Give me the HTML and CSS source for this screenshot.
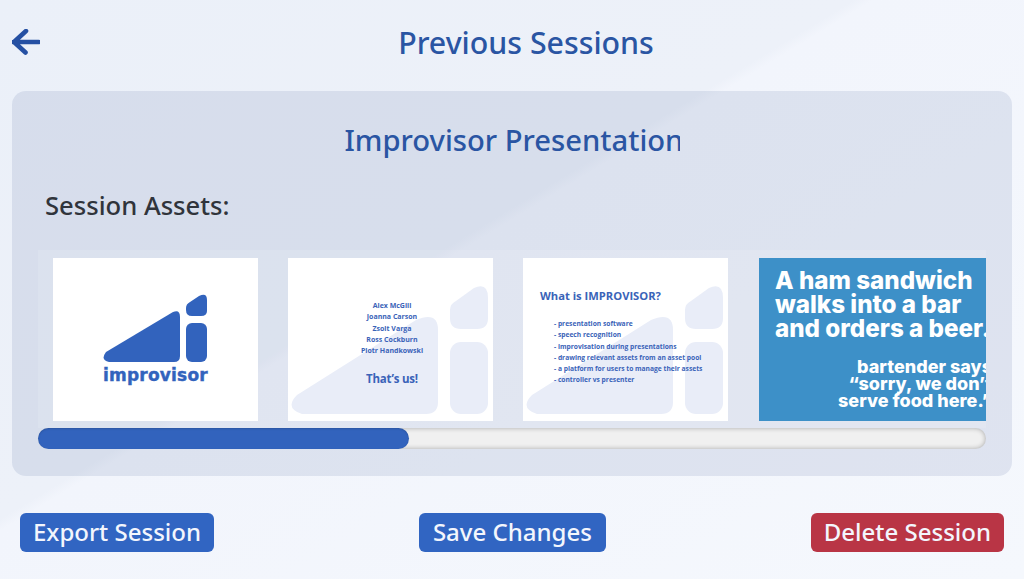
FILE: index.html
```html
<!DOCTYPE html>
<html lang="en">
<head>
    <meta charset="UTF-8">
    <meta name="viewport" content="width=device-width, initial-scale=1.0">
    <title>Previous Sessions</title>
    <link rel="stylesheet" href="styles.css">
</head>
<body>
    <header class="top-bar">
        <svg class="back-icon" width="28" height="26" viewBox="0 0 28 26">
            <path d="M1.5 13H26.5M14 2 2 13 13.5 23.5" fill="none" stroke="#2550a3" stroke-width="4.6" stroke-linecap="round" stroke-linejoin="round"/>
        </svg>
        <h1 class="page-title">Previous Sessions</h1>
    </header>

    <main class="session-panel">
        <h2 class="session-name">Improvisor Presentation</h2>
        <h3 class="assets-label">Session Assets:</h3>

        <div class="carousel">
            <div class="slide slide-logo">
                <svg class="logo-mark" width="104" height="70" viewBox="0 0 104 70">
                    <path d="M3 58 70 18Q77 15 77 23V62Q77 68 71 68H6Q-3 66 3 58Z" fill="#3263bd"/>
                    <path d="M83 14Q83 10 87 8L96 2Q104 -2 104 6V17Q104 22 98 22H89Q83 22 83 16Z" fill="#3263bd"/>
                    <rect x="83" y="29" width="21" height="39" rx="6" fill="#3263bd"/>
                </svg>
                <div class="logo-text">improvisor</div>
            </div>

            <div class="slide slide-names">
                <svg class="watermark" viewBox="0 0 205 163">
                    <path d="M9 137 128 62Q150 53 150 72V144Q150 156 138 156H14Q-4 150 9 137Z" fill="#e9edf8"/>
                    <path d="M162 52Q162 46 168 43L186 30Q200 24 200 40V60Q200 71 189 71H173Q162 71 162 60Z" fill="#e9edf8"/>
                    <rect x="162" y="84" width="38" height="72" rx="11" fill="#e9edf8"/>
                </svg>
                <div class="names-list">
                    <div>Alex McGill</div>
                    <div>Joanna Carson</div>
                    <div>Zsolt Varga</div>
                    <div>Ross Cockburn</div>
                    <div>Piotr Handkowski</div>
                </div>
                <div class="names-end">That’s us!</div>
            </div>

            <div class="slide slide-about">
                <svg class="watermark" viewBox="0 0 205 163">
                    <path d="M9 137 128 62Q150 53 150 72V144Q150 156 138 156H14Q-4 150 9 137Z" fill="#e9edf8"/>
                    <path d="M162 52Q162 46 168 43L186 30Q200 24 200 40V60Q200 71 189 71H173Q162 71 162 60Z" fill="#e9edf8"/>
                    <rect x="162" y="84" width="38" height="72" rx="11" fill="#e9edf8"/>
                </svg>
                <div class="about-title">What is IMPROVISOR?</div>
                <ul class="about-list">
                    <li>- presentation software</li>
                    <li>- speech recognition</li>
                    <li>- improvisation during presentations</li>
                    <li>- drawing relevant assets from an asset pool</li>
                    <li>- a platform for users to manage their assets</li>
                    <li>- controller vs presenter</li>
                </ul>
            </div>

            <div class="slide slide-joke">
                <div class="joke-big">A ham sandwich<br>walks into a bar<br>and orders a beer.</div>
                <div class="joke-small">bartender says<br>“sorry, we don’t<br>serve food here.”</div>
            </div>
        </div>

        <div class="scroll-track">
            <div class="scroll-thumb"></div>
        </div>
    </main>

    <footer class="actions">
        <button class="btn">Export Session</button>
        <button class="btn btn-save">Save Changes</button>
        <button class="btn btn-danger">Delete Session</button>
    </footer>
</body>
</html>
```

FILE: styles.css
```css
* {
    box-sizing: border-box;
}

body {
    margin: 0;
    width: 1024px;
    height: 579px;
    overflow: hidden;
    font-family: "Noto Sans", sans-serif;
    background: linear-gradient(148.7deg, #ebf0f9 0%, #edf1f9 43.2%, #f2f5fc 44.2%, #f5f8fd 100%);
}

.top-bar {
    display: flex;
    align-items: center;
    height: 91px;
    padding: 0 12px;
}

.back-icon {
    flex: none;
    margin-top: -8px;
}

.page-title {
    flex: 1;
    margin: -6px 0 0;
    text-align: center;
    font-size: 30.3px;
    font-weight: 500;
    color: #2a55a3;
}

.session-panel {
    height: 385px;
    margin: 0 12px;
    padding: 29px 26px 0;
    border-radius: 14px;
    background: rgba(30, 60, 130, 0.1);
}

.session-name {
    width: 335px;
    height: 40px;
    margin: 0 auto;
    overflow: hidden;
    white-space: nowrap;
    font-size: 29.2px;
    line-height: 40px;
    font-weight: 500;
    color: #2a55a3;
}

.assets-label {
    margin: 29px 0 0 7px;
    font-size: 25.6px;
    line-height: 34px;
    font-weight: 500;
    color: #30343b;
}

.carousel {
    display: flex;
    gap: 30px;
    height: 178px;
    margin-top: 27px;
    padding: 8px 0 7px 15px;
    overflow: hidden;
    background: rgba(255, 255, 255, 0.12);
}

.slide {
    position: relative;
    flex: none;
    width: 205px;
    height: 163px;
    background: #fff;
    color: #3a63b8;
}

.watermark {
    position: absolute;
    top: 0;
    left: 0;
    width: 205px;
    height: 163px;
}

.slide-logo {
    padding: 36px 0 0 50px;
}

.logo-mark {
    display: block;
}

.logo-text {
    margin-top: 1px;
    font-family: "DejaVu Sans", sans-serif;
    font-size: 17px;
    line-height: 20px;
    font-weight: 700;
    letter-spacing: 0.2px;
    color: #3263bd;
    -webkit-text-stroke: 0.4px #3263bd;
}

.slide-names {
    padding: 42px 0 0 3px;
    text-align: center;
    font-family: "Open Sans", sans-serif;
    font-weight: 700;
}

.names-list {
    position: relative;
    font-size: 7px;
    line-height: 11.3px;
}

.names-end {
    position: relative;
    margin-top: 15px;
    font-size: 11.5px;
    letter-spacing: -0.2px;
    line-height: 16px;
}

.slide-about {
    padding: 30px 0 0 17px;
    font-family: "Open Sans", sans-serif;
    font-weight: 700;
}

.about-title {
    position: relative;
    font-size: 11.2px;
    line-height: 16px;
}

.about-list {
    position: relative;
    margin: 14px 0 0;
    padding: 0 0 0 14px;
    list-style: none;
    font-size: 6.7px;
    line-height: 11.3px;
    white-space: nowrap;
}

.slide-joke {
    width: 233px;
    margin-left: 1px;
    padding: 11px 0 0 16px;
    background: #3d90c8;
    color: #fff;
    font-family: "Inter", sans-serif;
    font-weight: 800;
    white-space: nowrap;
}

.joke-big {
    font-size: 24.2px;
    line-height: 24px;
}

.joke-small {
    margin-top: 17px;
    text-align: right;
    font-size: 18px;
    line-height: 17px;
}

.scroll-track {
    height: 21px;
    border-radius: 11px;
    background: #f0f0f0;
    box-shadow: inset 0 0 5px rgba(0, 0, 0, 0.3);
}

.scroll-thumb {
    width: 371px;
    height: 21px;
    border-radius: 11px;
    background: #3263bd;
    box-shadow: inset 0 1px 2px rgba(0, 0, 0, 0.15);
}

.actions {
    display: flex;
    justify-content: space-between;
    margin-top: 37px;
    padding: 0 20px;
}

.btn {
    height: 39px;
    padding: 0 13px 3px;
    border: none;
    border-radius: 6px;
    background: #3165c2;
    color: #f3f6fd;
    font-family: "Noto Sans", sans-serif;
    font-size: 24px;
    font-weight: 500;
}

.btn-save {
    padding: 0 14px 3px;
}

.btn-danger {
    background: #b93545;
}
```
